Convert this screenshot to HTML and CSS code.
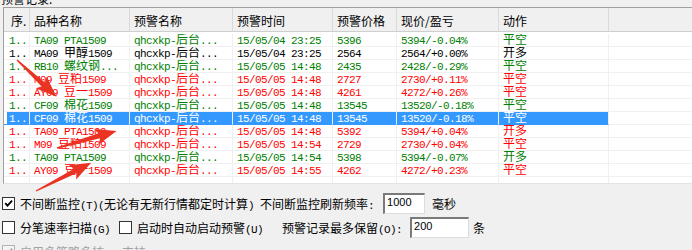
FILE: index.html
```html
<!DOCTYPE html>
<html lang="zh-CN">
<head>
  <meta charset="UTF-8" />
  <title>预警记录</title>
  <link rel="stylesheet" href="styles.css">
</head>
<body>

  <div class="caption">预警记录:</div>

  <!-- alert list -->
  <div class="list">
    <div class="row head">
      <div>序.</div>
      <div>品种名称</div>
      <div>预警名称</div>
      <div>预警时间</div>
      <div>预警价格</div>
      <div>现价/盈亏</div>
      <div>动作</div>
      <div></div>
    </div>
    <div class="rows" id="rows"></div>
  </div>

  <!-- options -->
  <div class="controls">
    <div class="line">
      <span class="cb on"><svg width="11" height="11" viewBox="0 0 11 11"><path d="M2.2 5.2l2.3 2.4 4.6-5" /></svg></span>
      <span>不间断监控<span class="k">(T)(</span>无论有无新行情都定时计算<span class="k">) </span>不间断监控刷新频率<span class="k">:</span></span>
      <span class="field refresh">1000</span>
      <span class="unit">毫秒</span>
    </div>
    <div class="line">
      <span class="cb"></span>
      <span>分笔速率扫描<span class="k">(G)</span></span>
      <span class="cb second"></span>
      <span>启动时自动启动预警<span class="k">(U)</span></span>
      <span class="keep">预警记录最多保留<span class="k">(O):</span></span>
      <span class="field max">200</span>
      <span class="unit">条</span>
    </div>
    <div class="line off">
      <span class="cb on"><svg width="11" height="11" viewBox="0 0 11 11"><path d="M2.2 5.2l2.3 2.4 4.6-5" /></svg></span>
      <span>启用多策略多核<span class="k">CPU</span>支持</span>
    </div>
  </div>

  <!-- red annotation arrows -->
  <svg class="arrows" width="692" height="250">
    <polygon transform="translate(17 60) rotate(43)" points="0,-0.7 36,-2.6 33,-8 54,0 33,8 36,2.6 0,0.7" />
    <polygon transform="translate(57 148) rotate(-16)" points="0,-0.7 44,-2.6 41,-8 62,0 41,8 44,2.6 0,0.7" />
    <polygon transform="translate(36 191) rotate(-27)" points="0,-0.7 44,-2.6 41,-8 62,0 41,8 44,2.6 0,0.7" />
  </svg>

  <script>
    const alerts = [
      ['green', 'TA09 PTA1509', '15/05/04 23:25', '5396', '5394/-0.04%', '平空'],
      ['black', 'MA09 甲醇1509', '15/05/04 23:25', '2564', '2564/+0.00%', '开多'],
      ['green', 'RB10 螺纹钢...', '15/05/05 14:48', '2435', '2428/-0.29%', '平空'],
      ['red', 'M09 豆粕1509', '15/05/05 14:48', '2727', '2730/+0.11%', '平空'],
      ['red', 'AY09 豆一1509', '15/05/05 14:48', '4261', '4272/+0.26%', '平空'],
      ['green', 'CF09 棉花1509', '15/05/05 14:48', '13545', '13520/-0.18%', '平空'],
      ['sel', 'CF09 棉花1509', '15/05/05 14:48', '13545', '13520/-0.18%', '平空'],
      ['red', 'TA09 PTA1509', '15/05/05 14:48', '5392', '5394/+0.04%', '开多'],
      ['red', 'M09 豆粕1509', '15/05/05 14:54', '2729', '2730/+0.04%', '平空'],
      ['green', 'TA09 PTA1509', '15/05/05 14:54', '5398', '5394/-0.07%', '开多'],
      ['red', 'AY09 豆一1509', '15/05/05 14:55', '4262', '4272/+0.23%', '平空']
    ];

    // chinese glyphs get their own (wider) font
    function wrap(text) {
      return text.replace(/([\u4e00-\u9fa5]+)/g, '<i>$1</i>');
    }

    function renderRows() {
      const container = document.getElementById('rows');
      let html = '';
      alerts.forEach(a => {
        const cells = ['1..', a[1], 'qhcxkp-后台...', a[2], a[3], a[4], a[5], ''];
        html += '<div class="row ' + a[0] + '">' +
          cells.map(c => '<div>' + wrap(c) + '</div>').join('') + '</div>';
      });
      html += '<div class="row">' + '<div></div>'.repeat(8) + '</div>';
      container.innerHTML = html;
    }

    renderRows();
  </script>

</body>
</html>
```

FILE: styles.css
```css
html, body {
  margin: 0;
  overflow: hidden;
}
body {
  display: flow-root;
  width: 692px;
  height: 250px;
  background: #f0f0f0;
  font-family: "Noto Sans CJK SC", sans-serif;
  font-size: 12px;
  color: #000;
}
.caption {
  margin-top: -9px;
  padding-left: 1px;
  height: 16px;
  line-height: 16px;
}

/* list */
.list {
  margin-left: 3px;
  width: 720px;
  height: 177px;
  box-sizing: border-box;
  border: 1px solid #a0a0a0;
  border-right: none;
  border-bottom-color: #e3e3e3;
  background: #fff;
  overflow: hidden;
}
.row {
  display: grid;
  grid-template-columns: 26px 100px 103px 100px 64px 102px 110px 1fr;
}
.row > div {
  box-sizing: border-box;
  white-space: nowrap;
  overflow: hidden;
}
.head {
  height: 23px;
  background: #f0f0f0;
  border-bottom: 1px solid #cfcfcf;
}
.head > div {
  padding: 5px 0 0 4px;
  line-height: 16px;
  border-right: 1px solid #dadada;
}
.head > div:first-child {
  padding-left: 7px;
}
.rows {
  padding-top: 2px;
}
.rows .row > div {
  height: 13px;
  padding: 2px 0 0 4px;
  line-height: 11px;
  border-right: 1px solid #f0f0f0;
  border-bottom: 1px solid #f0f0f0;
  font-family: "Liberation Mono", monospace;
  font-size: 11px;
  letter-spacing: -0.6px;
}
.rows .row > div:first-child {
  padding-left: 5px;
}
.rows i {
  font-style: normal;
  font-family: "Noto Sans CJK SC", sans-serif;
  font-size: 12px;
  letter-spacing: 0;
  line-height: 0;
}
.green { color: #008000; }
.red { color: #ff0000; }
.black { color: #000; }
.sel { color: #fff; }
.rows .sel > div {
  background: #3399ff;
  border-bottom-color: #3399ff;
}
.rows .sel > div:first-child {
  box-shadow: inset 3px 0 #fff;
}
.rows .sel > div:last-child {
  background: #fff;
  border-bottom-color: #f0f0f0;
}

/* options */
.controls {
  margin-top: 9px;
  padding-left: 2px;
  display: flex;
  flex-direction: column;
  gap: 3px;
}
.line {
  display: flex;
  align-items: center;
  height: 21px;
  white-space: nowrap;
}
.cb {
  width: 13px;
  height: 13px;
  box-sizing: border-box;
  border: 1px solid #333;
  background: #fff;
  margin-right: 5px;
  flex: none;
}
.cb svg {
  display: block;
  fill: none;
  stroke: #000;
  stroke-width: 1.8;
}
.cb.second {
  margin-left: 9px;
}
.k {
  font-family: "Liberation Mono", monospace;
  font-size: 11px;
  letter-spacing: -0.6px;
}
.keep {
  margin-left: 19px;
}
.field {
  height: 21px;
  box-sizing: border-box;
  padding: 1px 0 0 2px;
  border-top: 2px solid #7a7a7a;
  border-left: 2px solid #7a7a7a;
  border-right: 1px solid #dcdcdc;
  border-bottom: 1px solid #dcdcdc;
  background: #fff;
  font-family: "Liberation Sans", sans-serif;
  font-size: 11px;
  line-height: 12px;
}
.refresh {
  width: 42px;
  margin-left: 9px;
}
.max {
  width: 59px;
  margin-left: 8px;
}
.unit {
  margin-left: 7px;
}
.max + .unit {
  margin-left: 4px;
}
.off {
  color: #a3a3a3;
}
.off .cb {
  border-color: #b4b4b4;
  background: #f4f4f4;
}
.off .cb svg {
  stroke: #a8a8a8;
}

/* annotation arrows */
.arrows {
  position: absolute;
  top: 0;
  left: 0;
  pointer-events: none;
  fill: #ea3323;
}
```
